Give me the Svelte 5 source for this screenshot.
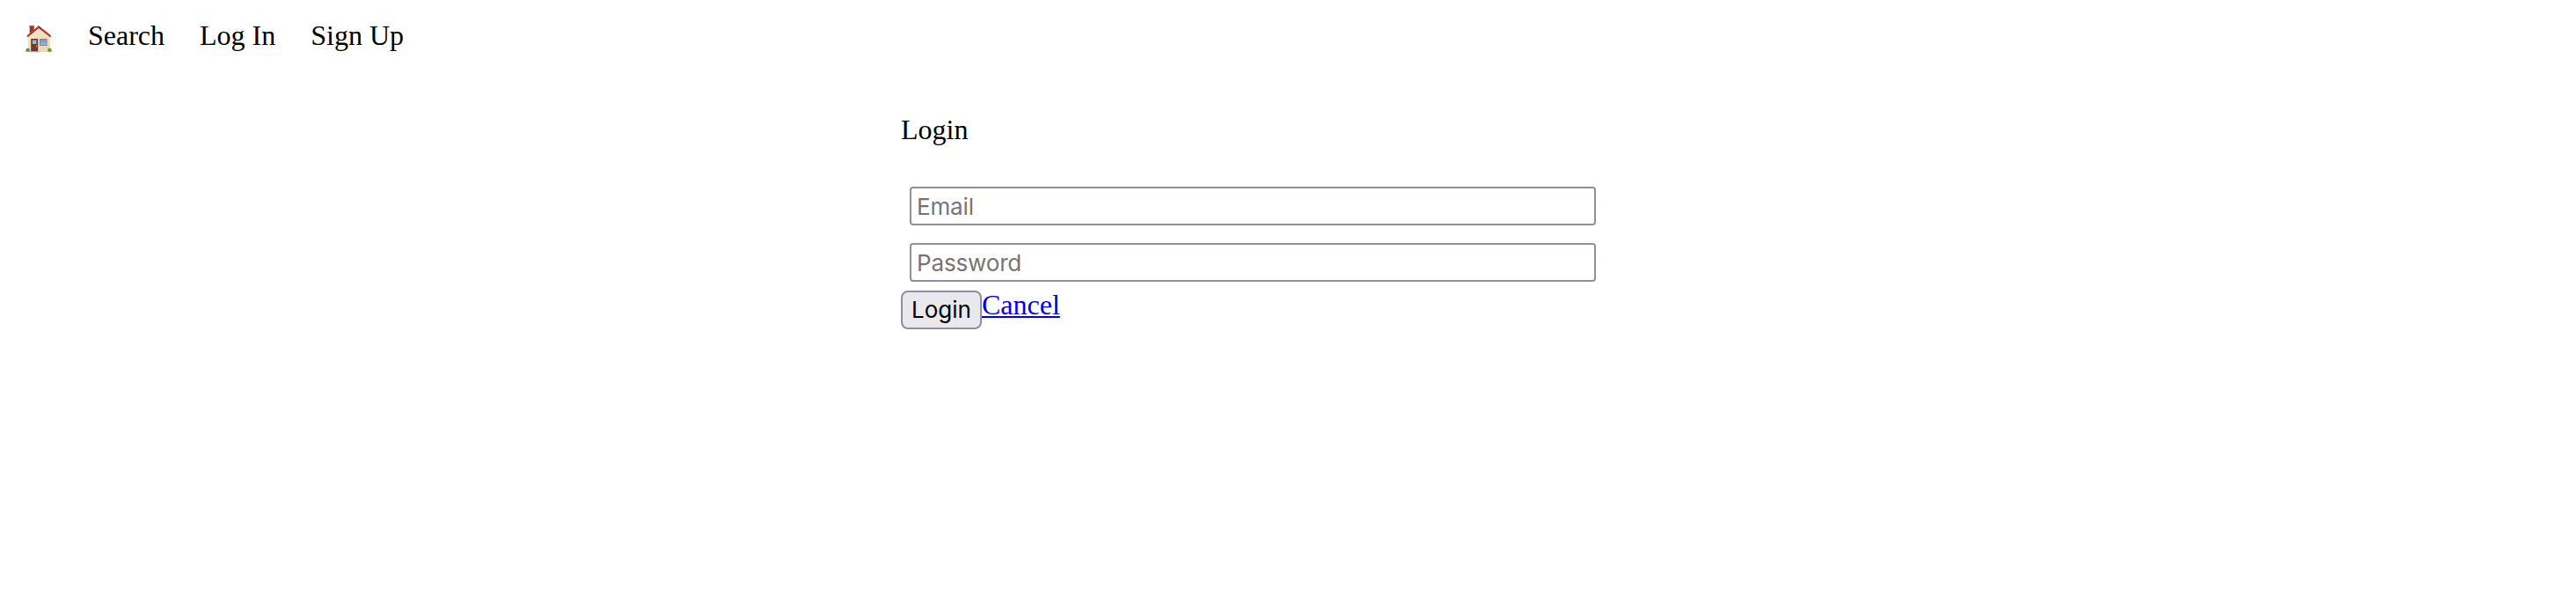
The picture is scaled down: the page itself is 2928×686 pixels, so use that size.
<script>
  let email = $state('');
  let password = $state('');
</script>

<nav>
  <a href="#home" aria-label="Home">
    <svg class="home" viewBox="0 0 32 34">
      <defs>
        <linearGradient id="wall" x1="0" y1="0" x2="1" y2="1">
          <stop offset="0" stop-color="#f6e9cc" />
          <stop offset="1" stop-color="#e6d5b0" />
        </linearGradient>
        <linearGradient id="glass" x1="0" y1="0" x2="0" y2="1">
          <stop offset="0" stop-color="#5d9bd8" />
          <stop offset="1" stop-color="#8cbcec" />
        </linearGradient>
      </defs>
      <rect x="5.7" y="2" width="5" height="8" fill="#8d392d" />
      <rect x="5.3" y="1.1" width="5.8" height="1.6" fill="#a94536" />
      <path d="M16 4 L28.8 13.5 V31 H3.6 V13.5 Z" fill="url(#wall)" />
      <path d="M3 13.8 L16 3.2 L29.6 13.8" fill="none" stroke="#6d2a22" stroke-width="1.2" />
      <path d="M2.7 12.2 L16 0.9 L30 12.2 L29.3 13.5 L16 3.2 L3.3 13.5 Z" fill="#c8392e" />
      <rect x="7.2" y="16" width="8" height="14.6" fill="#6b3b2b" />
      <rect x="9" y="17.6" width="4.4" height="4.4" fill="#8fbce6" />
      <circle cx="13.6" cy="24.6" r=".8" fill="#e0b04a" />
      <rect x="17" y="16" width="8.6" height="8" fill="#a58068" />
      <rect x="18" y="17" width="6.6" height="6" fill="url(#glass)" />
      <path d="M1.2 30.8 C0.6 28 3.5 25.4 5.8 27.8 V30.8 Z" fill="#6a9144" />
      <path d="M30.8 30.8 C31.4 28 28.8 25.4 26.4 27.8 V30.8 Z" fill="#6a9144" />
      <rect x="6" y="30" width="10.2" height="1.3" fill="#aaa49c" />
    </svg>
  </a>
  <a href="#search">Search</a>
  <a href="#login">Log In</a>
  <a href="#signup">Sign Up</a>
</nav>

<main>
  <p>Login</p>
  <form onsubmit={(e) => e.preventDefault()}>
    <input type="email" placeholder="Email" bind:value={email} />
    <input type="password" placeholder="Password" bind:value={password} />
    <div class="actions">
      <button type="submit">Login</button>
      <a href="#home">Cancel</a>
    </div>
  </form>
</main>

<style>
  :global(body) {
    margin: 0;
    background: #fff;
    color: #000;
    font: 32px/36px "Liberation Serif", "Times New Roman", serif;
  }
  nav {
    display: flex;
    gap: 40px;
    padding: 22px 28px 0;
    height: 36px;
  }
  nav a {
    color: #000;
    text-decoration: none;
  }
  .home {
    display: block;
    width: 32px;
    height: 34px;
    margin-top: 6px;
  }
  main {
    width: 800px;
    margin: 71px 0 0 1024px;
  }
  p {
    margin: 0 0 47px;
  }
  form {
    display: flex;
    flex-direction: column;
  }
  input {
    box-sizing: border-box;
    height: 44px;
    margin: 0 10px 20px;
    padding: 2px 6px;
    border: 2px solid #8f8f9d;
    border-radius: 4px;
    background: #fff;
    font: 26px/32px Inter, sans-serif;
    letter-spacing: -0.15px;
  }
  input + input {
    margin-bottom: 10px;
  }
  input::placeholder {
    color: #757575;
    opacity: 1;
  }
  .actions {
    display: flex;
    align-items: flex-start;
  }
  button {
    box-sizing: border-box;
    width: 92px;
    height: 44px;
    padding: 0;
    border: 2px solid #8f8f9d;
    border-radius: 8px;
    background: #e9e9ed;
    color: #000;
    font: 26px/32px Inter, sans-serif;
  }
  .actions a {
    margin-top: -2px;
    color: #0000ee;
    text-decoration-thickness: 2px;
    text-underline-offset: 2px;
  }
</style>
